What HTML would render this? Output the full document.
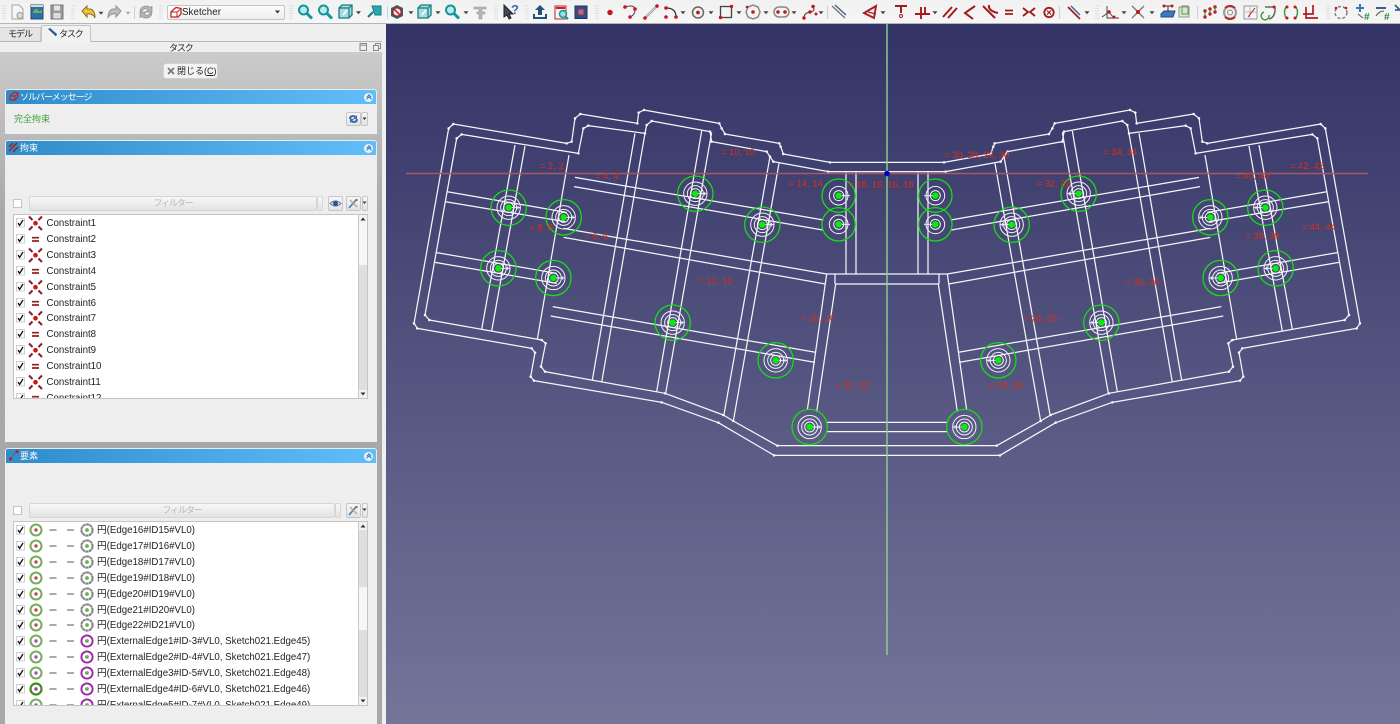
<!DOCTYPE html>
<html lang="ja"><head><meta charset="utf-8"><title>FreeCAD Sketcher</title>
<style>
*{box-sizing:border-box}
html,body{margin:0;padding:0;width:1400px;height:724px;overflow:hidden;background:#efefef}
#w{position:absolute;left:0;top:0;width:1400px;height:724px;overflow:hidden;filter:blur(.3px);font:9.7px "Liberation Sans","Noto Sans CJK JP",sans-serif;color:#222}
.a{position:absolute}
.k{letter-spacing:-1.1px;font-size:9px}
.hd{position:absolute;left:5px;width:372px;height:15px;background:linear-gradient(90deg,#2f8cca,#62bdfb);border:1px solid #e6eef5;border-bottom:0;border-radius:3px 3px 0 0;color:#fff;font-size:9px;font-weight:bold;line-height:14px;padding-left:14px}
.bd{position:absolute;left:5px;width:372px;background:#eee}
.col{position:absolute;right:3px;top:2.500px;width:9px;height:9px;border-radius:50%;background:#eef6fc}
.col:before,.col:after{content:"";position:absolute;left:3px;width:3px;height:3px;border-top:1px solid #2f7fb8;border-left:1px solid #2f7fb8;transform:rotate(45deg)}
.col:before{top:2px}.col:after{top:4.500px}
.btn{position:absolute;background:linear-gradient(#f7f7f7,#e3e3e3);border:1px solid #c6c6c6;border-radius:2px}
.cb{position:absolute;background:#fff;border:1px solid #c4c4c4;width:9px;height:9px}
.list{position:absolute;left:13px;width:355px;height:185px;background:#fff;border:1px solid #c4c4c4;overflow:hidden}
.r{position:absolute;left:0;height:16px;line-height:16px;white-space:nowrap;width:345px}
.r svg{position:absolute;left:0;top:0;width:100px;height:16px}
.r span{position:absolute;top:1px}
.sb{position:absolute;right:0;top:0;width:9px;height:183px;background:#dfdfdf;border-left:1px solid #c8c8c8}
.sbh{position:absolute;left:0;width:8px;background:#f7f7f7}
.sba{position:absolute;left:0;width:8px;height:8px;background:#f3f3f3}
</style></head><body><div id="w">
<svg width="0" height="0" style="position:absolute">
<defs>
<marker id="m" markerUnits="userSpaceOnUse" markerWidth="10" markerHeight="10" refX="5" refY="5"><circle cx="5" cy="5" r="3.800" fill="#f8f8fc"/></marker>
<g id="hole"><circle r="53" fill="none" stroke="#14e014" stroke-width="3.800"/><g fill="none" stroke="#f0f0f6" stroke-width="3"><circle r="15"/><circle r="24"/><circle r="35"/></g><path d="M0 0H35M28 -5V5" stroke="#f0f0f6" stroke-width="3"/><circle r="9.500" fill="#04f004"/></g>
<g id="holeb"><circle r="50" fill="none" stroke="#14e014" stroke-width="3.800"/><g fill="none" stroke="#f0f0f6" stroke-width="3"><circle r="15"/><circle r="28"/></g><path d="M0 0H34" stroke="#f0f0f6" stroke-width="3"/><circle r="9.500" fill="#04f004"/></g>
<g id="ck"><rect x="16.500" y="3.500" width="8" height="8.500" fill="#fff" stroke="#cfcfcf"/><path d="M18 8l1.600 2.400L23 5" fill="none" stroke="#111" stroke-width="1.300"/></g>
<g id="X"><path d="M29 1.500l3.500 3.500M42 1.500l-3.500 3.500M29 15l3.500-3.500M42 15l-3.500-3.500" stroke="#8c1b1b" stroke-width="2"/><circle cx="35.500" cy="8.200" r="2.300" fill="#c91616"/></g>
<g id="E"><path d="M32 6.700h7M32 10h7" stroke="#951c1c" stroke-width="1.700"/></g>
<g id="ds"><path d="M49.500 8h7M67 8h7" stroke="#555" stroke-width="1"/></g>
<g id="c1"><circle cx="36" cy="8" r="5.500" fill="#fff" stroke="#74ae58" stroke-width="2"/><circle cx="36" cy="8" r="1.700" fill="#c24a4a"/></g>
<g id="c2"><circle cx="36" cy="8" r="5.500" fill="#fff" stroke="#74ae58" stroke-width="2"/><circle cx="36" cy="8" r="1.700" fill="#c040c8"/></g>
<g id="c3"><circle cx="36" cy="8" r="5.500" fill="#fff" stroke="#3f8c1c" stroke-width="2.200"/><circle cx="36" cy="8" r="1.700" fill="#b030b8"/></g>
<g id="g1"><circle cx="87" cy="8" r="5.600" fill="#fff" stroke="#808080" stroke-width="2" stroke-dasharray="3.200 .4"/><circle cx="87" cy="8" r="1.900" fill="#6cb04a"/></g>
<g id="g2"><circle cx="87" cy="8" r="5.600" fill="#fff" stroke="#a224a8" stroke-width="1.900"/><circle cx="87" cy="8" r="1.900" fill="#6cb04a"/></g>
<path id="dd" d="M-2.500-1.200h5l-2.500 3z" fill="#444"/>
<g id="gr" fill="#cfcfcf"><circle cx="-1" cy="-6" r=".6"/><circle cx="1" cy="-6" r=".6"/><circle cx="-1" cy="-3.500" r=".6"/><circle cx="1" cy="-3.500" r=".6"/><circle cx="-1" cy="-1" r=".6"/><circle cx="1" cy="-1" r=".6"/><circle cx="-1" cy="1.500" r=".6"/><circle cx="1" cy="1.500" r=".6"/><circle cx="-1" cy="4" r=".6"/><circle cx="1" cy="4" r=".6"/><circle cx="-1" cy="6.500" r=".6"/><circle cx="1" cy="6.500" r=".6"/></g>
<g id="mg"><circle cx="-1.500" cy="-2" r="4.500" fill="#bdeaea" stroke="#14959e" stroke-width="2"/><path d="M2 1.500l5 5" stroke="#14959e" stroke-width="3"/></g>
<g id="cube"><path d="M-7-4l3-3h10v10l-3 3H-7z" fill="#a5dcdc" stroke="#137e86" stroke-width="1.300"/><path d="M-7-4H3V6M3-4l3-3" fill="none" stroke="#137e86" stroke-width="1.200"/><path d="M-3 3l4-5" stroke="#fff" stroke-width="1.500"/></g>
</defs></svg>

<!-- toolbar -->
<div class="a" style="left:0;top:0;width:1400px;height:24px;background:linear-gradient(#f1f1f1,#f6f6f6);border-bottom:1px solid #b4b4b4"></div>
<svg class="a" style="left:0;top:0" width="1400" height="24">
<use href="#gr" x="4" y="12"/><use href="#gr" x="73" y="12"/><use href="#gr" x="161" y="12"/><use href="#gr" x="291" y="12"/><use href="#gr" x="496" y="12"/><use href="#gr" x="527" y="12"/><use href="#gr" x="597" y="12"/><use href="#gr" x="1097" y="12"/><use href="#gr" x="1328" y="12"/>
<path d="M134.500 6v13M387.500 6v13M827.500 6v13M1059.500 6v13M1197.500 6v13" stroke="#d0d0d0"/>
<!-- file -->
<path d="M12 5h7l4 4v10H12z" fill="#f6f6f6" stroke="#a4a4a4"/><circle cx="20" cy="15.500" r="3" fill="#ddd" stroke="#999"/>
<rect x="31" y="5" width="12" height="14" fill="#2f6ea8" stroke="#1d4a78"/><path d="M33 12q3-5 5-2t4-1v4h-9z" fill="#68b05a"/><path d="M31 5h12v2H31z" fill="#d8d8d8"/>
<path d="M51 5h12v14H51z" fill="#9a9a9a" stroke="#777"/><rect x="54" y="5.500" width="6" height="5" fill="#e6e6e6"/><rect x="53.500" y="13" width="7" height="5.500" fill="#ddd"/>
<path d="M82 11l5-5v3h3q5 1 5 9q-2-5-8-4v3z" fill="#eec23e" stroke="#8a6d1c"/><use href="#dd" x="101" y="13"/>
<path d="M121 11l-5-5v3h-3q-5 1-5 9q2-5 8-4v3z" fill="#b9bec3" stroke="#8f9499"/><use href="#dd" x="128" y="13" opacity=".4"/>
<path d="M140 11q1-5 6-5q3 0 5 2l1-2v6h-6l2-2q-4-3-6 1zM152 13q-1 5-6 5q-3 0-5-2l-1 2v-6h6l-2 2q4 3 6-1z" fill="#b2b6ba" stroke="#8a8e92" stroke-width=".7"/>
<!-- view -->
<use href="#mg" x="305" y="12"/><use href="#mg" x="325" y="12"/><use href="#cube" x="346" y="12"/><use href="#dd" x="358.500" y="12.500"/>
<path d="M372 6h9v9h-6z" fill="#27a9b0" stroke="#137e86"/><path d="M373 12l-5 5" stroke="#137e86" stroke-width="2"/>
<path d="M391 8l6-3 6 3v8l-6 3-6-3z" fill="#16737a"/><circle cx="397" cy="12" r="4.300" fill="#eee" stroke="#c61818" stroke-width="1.500"/><path d="M394 9l6 6" stroke="#c61818" stroke-width="1.500"/><use href="#dd" x="411" y="12.500"/>
<use href="#cube" x="425" y="12"/><use href="#dd" x="438" y="12.500"/><use href="#mg" x="452" y="12"/><use href="#dd" x="466" y="12.500"/>
<path d="M474 7h12v2h-4v3h3v2h-3v5h-3v-5h-2v-2h2V9h-5z" fill="#b6b6b6" stroke="#9a9a9a" stroke-width=".6"/>
<path d="M504 5l0 12 3-2 2 4 2-1-2-4h4z" fill="#3e4a5a" stroke="#222"/><text x="511" y="14" font-size="13" font-weight="bold" fill="#3b6aa8" font-family="Liberation Sans">?</text>
<path d="M533 14v5h14v-5h-2v3h-10v-3z" fill="#23507c"/><path d="M540 5l5 5h-3v5h-4v-5h-3z" fill="#23507c"/>
<path d="M555 6h11v13h-11z" fill="#f4f4f4" stroke="#c62020"/><path d="M556 8h9" stroke="#c62020" stroke-width="2"/><circle cx="563" cy="14" r="3.500" fill="#9adede" stroke="#12939a" stroke-width="1.400"/><path d="M565 16l3 3" stroke="#12939a" stroke-width="2"/>
<rect x="575" y="6" width="12" height="12.500" fill="#2b4f8c" stroke="#1e3560"/><rect x="578" y="9" width="6" height="6" fill="#8a7aa8" stroke="#c02020"/>
<!-- sketch geometry -->
<circle cx="610" cy="12.500" r="2.700" fill="#c71616"/>
<path d="M625 7q10-3 10 3 0 5-5 7" fill="none" stroke="#444"/><g fill="#c71616"><circle cx="625" cy="7" r="1.800"/><circle cx="635" cy="9" r="1.800"/><circle cx="630" cy="17" r="1.800"/></g>
<path d="M645 18l12-12" stroke="#999" stroke-width="2.400"/><path d="M645 18l12-12" stroke="#eee" stroke-width=".8"/><g fill="#c71616"><circle cx="645" cy="18" r="1.800"/><circle cx="657" cy="6" r="1.800"/></g>
<path d="M666 8q10 0 10 9" fill="none" stroke="#333" stroke-width="1.200"/><g fill="#c71616"><circle cx="666" cy="8" r="1.800"/><circle cx="666" cy="17" r="1.800"/><circle cx="676" cy="17" r="1.800"/></g><use href="#dd" x="683" y="12.500"/>
<circle cx="698" cy="12.500" r="5.500" fill="none" stroke="#666" stroke-width="1.500"/><circle cx="698" cy="12.500" r="1.900" fill="#c71616"/><use href="#dd" x="711" y="12.500"/>
<rect x="720.500" y="6.500" width="11" height="11" fill="none" stroke="#444" stroke-width="1.300"/><g fill="#c71616"><circle cx="720.500" cy="17.500" r="1.700"/><circle cx="731.500" cy="6.500" r="1.700"/></g><use href="#dd" x="739" y="12.500"/>
<path d="M748 7l5-2 5 2 2 5-2 5-5 2-5-2-2-5z" fill="none" stroke="#888" stroke-width="1.500"/><circle cx="753" cy="12" r="1.800" fill="#c71616"/><circle cx="747" cy="7" r="1.300" fill="#c71616"/><use href="#dd" x="766" y="12.500"/>
<rect x="774" y="7" width="15" height="10" rx="5" fill="none" stroke="#888" stroke-width="1.500"/><g fill="#c71616"><circle cx="778" cy="12" r="1.800"/><circle cx="785" cy="12" r="1.800"/></g><use href="#dd" x="794" y="12.500"/>
<path d="M804 18q0-5 6-6t3-5l2-1" fill="none" stroke="#444" stroke-width="1.100"/><g fill="#c71616"><circle cx="804" cy="18" r="1.700"/><circle cx="810" cy="12" r="1.700"/><circle cx="813" cy="6.500" r="1.700"/><circle cx="816" cy="14" r="1.500"/></g><use href="#dd" x="821" y="12.500"/>
<path d="M832 6l13 12" stroke="#777" stroke-width="1.400"/><path d="M835 5l11 10" stroke="#3f5f8c" stroke-width="1.300"/>
<path d="M864 13l12-7-2 12z" fill="none" stroke="#a81e1e" stroke-width="1.900"/><path d="M868 12l8 2" stroke="#a81e1e" stroke-width="1.400"/><use href="#dd" x="883" y="12.500"/>
<!-- constraints -->
<path d="M895 6h12M901 6v7" stroke="#a21c1c" stroke-width="2"/><circle cx="901" cy="16" r="1.500" fill="none" stroke="#a21c1c"/>
<path d="M915 14h15M921 7v12M925 7v7" stroke="#a21c1c" stroke-width="1.900"/><use href="#dd" x="935" y="12.500"/>
<path d="M943 17l9-10M948 18l9-10" stroke="#a21c1c" stroke-width="2"/>
<path d="M975 6l-10 7 8 6" fill="none" stroke="#a21c1c" stroke-width="2"/>
<path d="M983 6l12 12M989 5q-1 6 9 8" fill="none" stroke="#a21c1c" stroke-width="2"/>
<path d="M1005 10.500h8M1005 14h8" stroke="#a21c1c" stroke-width="1.800"/>
<path d="M1023 8l5 4-5 4M1035 8l-5 4 5 4" fill="none" stroke="#a21c1c" stroke-width="1.900"/>
<circle cx="1049" cy="12.500" r="4.700" fill="none" stroke="#a21c1c" stroke-width="1.800"/><path d="M1047 10.500l4 4m0-4l-4 4" stroke="#a21c1c" stroke-width="1.200"/>
<path d="M1068 7l12 12" stroke="#a21c1c" stroke-width="1.800"/><path d="M1071 6l9 9" stroke="#3f5f8c" stroke-width="1.300"/><use href="#dd" x="1087" y="12.500"/>
<path d="M1107 6v12h12" fill="none" stroke="#666" stroke-width="1.200"/><path d="M1102 17l7-5 4 5" fill="none" stroke="#444"/><g fill="#c71616"><circle cx="1109" cy="12" r="1.800"/><circle cx="1114" cy="17" r="1.500"/></g><use href="#dd" x="1124" y="12.500"/>
<path d="M1132 6l12 12M1144 6l-12 12" stroke="#777" stroke-width="1.300"/><circle cx="1138" cy="12" r="2" fill="#c71616"/><use href="#dd" x="1152" y="12.500"/>
<path d="M1161 14l3-3h11l-2 6h-12z" fill="#3f78b8" stroke="#234e80"/><path d="M1163 6h10M1168 6v6" stroke="#333"/><g fill="#c71616"><circle cx="1164" cy="6" r="1.500"/><circle cx="1172" cy="6" r="1.500"/></g>
<rect x="1179" y="7" width="10" height="10" fill="#dde6d8" stroke="#88a088"/><rect x="1182" y="6" width="6" height="8" fill="none" stroke="#5b9c55"/>
<g fill="#c71616"><circle cx="1205" cy="17" r="1.700"/><circle cx="1205" cy="11" r="1.700"/><circle cx="1210" cy="14" r="1.700"/><circle cx="1210" cy="9" r="1.700"/><circle cx="1215" cy="12" r="1.700"/><circle cx="1215" cy="7" r="1.700"/></g><path d="M1205 11v6M1210 9v5M1215 7v5" stroke="#3a8a3a"/>
<circle cx="1230" cy="12.500" r="6" fill="none" stroke="#999" stroke-width="2"/><circle cx="1230" cy="12.500" r="2.500" fill="none" stroke="#888"/><path d="M1225 8a7 7 0 0 1 10 0M1225 17a7 7 0 0 0 10 0" fill="none" stroke="#c71616" stroke-width="1.700"/>
<rect x="1244" y="6" width="13" height="13" fill="#f4f4f4" stroke="#999"/><path d="M1244 12h13M1250 6v13" stroke="#bbb"/><path d="M1248 17l7-9" stroke="#c71616"/>
<path d="M1265 7h10v4q-1 7-6 8" fill="none" stroke="#666" stroke-width="1.500"/><path d="M1264 12a4 4 0 1 0 5 3" fill="none" stroke="#3f9a3f" stroke-width="1.500"/><circle cx="1274" cy="7" r="1.500" fill="#c71616"/>
<path d="M1286 7q-3 5 0 11M1296 7q3 5 0 11" fill="none" stroke="#3f9a3f" stroke-width="1.500"/><g fill="#c71616"><circle cx="1287" cy="7" r="1.500"/><circle cx="1295" cy="7" r="1.500"/><circle cx="1287" cy="18" r="1.500"/><circle cx="1295" cy="18" r="1.500"/></g>
<path d="M1306 7v11h12M1303 14h10V5" fill="none" stroke="#b01c1c" stroke-width="1.700"/>
<circle cx="1341" cy="12.500" r="6" fill="none" stroke="#777" stroke-width="1.400" stroke-dasharray="3 2"/><circle cx="1336" cy="8" r="1.300" fill="#c71616"/><circle cx="1346" cy="8" r="1.300" fill="#c71616"/>
<path d="M1356 8h8M1360 4v8" stroke="#3a78b8" stroke-width="2"/><path d="M1358 14l5 4" stroke="#555"/><text x="1364" y="20" font-size="10" font-weight="bold" fill="#2c8c2c" font-family="Liberation Sans">#</text>
<path d="M1376 8h10" stroke="#3a5f8c" stroke-width="2"/><path d="M1376 16q3-5 8-5" fill="none" stroke="#555"/><text x="1384" y="20" font-size="10" font-weight="bold" fill="#2c8c2c" font-family="Liberation Sans">#</text>
<path d="M1395 5l5 5M1395 10h5" stroke="#3a5f8c" stroke-width="1.800"/>
</svg>
<!-- workbench combo -->
<div class="btn" style="left:167px;top:5px;width:118px;height:15px;background:linear-gradient(#fbfbfb,#eee)"></div>
<svg class="a" style="left:169px;top:6px" width="14" height="13"><path d="M4 4l3-2.500 5 1V8l-3 3H2V6z" fill="#fff" stroke="#c62020" stroke-width="1.300"/><path d="M2 6h6v5M8 6l4-3" fill="none" stroke="#c62020"/></svg>
<div class="a" style="left:182px;top:6px;font-size:9.7px;line-height:13px;letter-spacing:.1px">Sketcher</div>
<svg class="a" style="left:274px;top:9px" width="8" height="6"><path d="M1 1.500h5L3.500 4.500z" fill="#333"/></svg>

<!-- dock background -->
<div class="a" style="left:0;top:24px;width:386px;height:700px;background:#efefef"></div>
<div class="a" style="left:0;top:52px;width:382px;height:672px;background:linear-gradient(#cbcbcb 0,#a9a9a9 160px,#a8a8a8 100%)"></div>
<!-- tabs -->
<div class="a" style="left:0;top:41px;width:382px;height:1px;background:#b8b8b8"></div>
<div class="a" style="left:0;top:27px;width:41px;height:14px;background:#e4e4e4;border:1px solid #c8c8c8;border-left:0;border-bottom:0;text-align:center;line-height:13px"><span class="k">モデル</span></div>
<div class="a" style="left:41px;top:25px;width:50px;height:17px;background:#f2f2f2;border:1px solid #c4c4c4;border-bottom:0;border-radius:2px 2px 0 0;line-height:16px;padding-left:17px"><span class="k">タスク</span></div>
<svg class="a" style="left:47px;top:27px" width="11" height="11"><path d="M1 2l2-1 7 6-1 2.500z" fill="#2e5a8c"/></svg>
<div class="a" style="left:169px;top:41.500px;line-height:12px"><span class="k">タスク</span></div>
<svg class="a" style="left:358px;top:42px" width="24" height="10"><rect x="2" y="1.500" width="6.500" height="7" fill="none" stroke="#8a8a8a"/><path d="M2 3.200h6.500" stroke="#8a8a8a"/><rect x="15.500" y="3.500" width="5" height="5" fill="none" stroke="#8a8a8a"/><path d="M17.500 3.500v-2h5v5h-2" fill="none" stroke="#8a8a8a"/></svg>
<!-- close -->
<div class="a" style="left:164px;top:64px;width:53px;height:14px;background:#f3f3f3;border-radius:2px;box-shadow:0 0 0 .5px #ddd;line-height:14px;padding-left:13px;font-size:9px">閉じる(<u>C</u>)</div>
<svg class="a" style="left:167px;top:67px" width="8" height="8"><path d="M1 1l6 6M7 1l-6 6" stroke="#777" stroke-width="1.700"/></svg>

<!-- solver -->
<div class="bd" style="top:103px;height:31px"></div>
<div class="hd" style="top:89px"><span class="k" style="letter-spacing:-1px;font-weight:normal">ソルバーメッセージ</span><i class="col"></i></div>
<svg class="a" style="left:8px;top:91px" width="11" height="11"><path d="M3 4l3-3 4 1v4l-3 3H2V5z" fill="none" stroke="#c62020" stroke-width="1.200"/><path d="M2 5h5v4M7 5l3-3" fill="none" stroke="#c62020"/></svg>
<div class="a" style="left:14px;top:113px;font-size:9px;line-height:13px;color:#3da23d">完全拘束</div>
<div class="btn" style="left:346px;top:112px;width:15px;height:14px"></div>
<svg class="a" style="left:347px;top:113px" width="13" height="12"><path d="M2 6q0-4 4-4 2 0 3 1l1-1v4H6l1.500-1.500Q5 3 4 6zM11 6q0 4-4 4-2 0-3-1l-1 1V6h4L5.500 7.500Q8 9 9 6z" fill="#3f73ad"/></svg>
<div class="btn" style="left:361px;top:112px;width:7px;height:14px"></div>
<svg class="a" style="left:362px;top:117px" width="6" height="4"><path d="M.5.500h4L2.500 3z" fill="#333"/></svg>

<!-- constraints -->
<div class="bd" style="top:154px;height:288px"></div>
<div class="hd" style="top:140px"><span style="font-weight:normal">拘束</span><i class="col"></i></div>
<svg class="a" style="left:8px;top:141px" width="11" height="12"><path d="M1 10l8-8M1 6l4-4M5 11l5-5" stroke="#a01c1c" stroke-width="1.500"/></svg>
<div class="cb" style="left:13px;top:199px"></div>
<div class="btn" style="left:29px;top:196px;width:288px;height:15px;border-color:#d6d6d6;text-align:center;line-height:13px;color:#b8b8b8"><span class="k">フィルター</span></div>
<div class="btn" style="left:317px;top:196px;width:6px;height:15px;border-color:#d6d6d6"></div>
<div class="btn" style="left:328px;top:196px;width:15px;height:15px"></div>
<svg class="a" style="left:329px;top:198px" width="13" height="11"><path d="M1 5.500q5.500-5 11 0q-5.500 5-11 0z" fill="#dde6f0" stroke="#5a7da5"/><circle cx="6.500" cy="5.500" r="2.400" fill="#28507e"/></svg>
<div class="btn" style="left:346px;top:196px;width:15px;height:15px"></div>
<svg class="a" style="left:347px;top:197px" width="13" height="13"><path d="M2 11l7-8" stroke="#4a7db0" stroke-width="1.700"/><path d="M3 3l7 7" stroke="#aaa" stroke-width="1.400"/><circle cx="9.500" cy="3" r="1.200" fill="#b55"/></svg>
<div class="btn" style="left:362px;top:196px;width:6px;height:15px"></div>
<svg class="a" style="left:362px;top:201px" width="6" height="4"><path d="M.5.500h4L2.500 3z" fill="#333"/></svg>
<div class="list" style="top:214px">
<div class="r" style="top:0"><svg><use href="#ck" x="-14" y="0"/><use href="#X" x="-14" y="0"/></svg><span style="left:32.500px">Constraint1</span></div>
<div class="r" style="top:15.900px"><svg><use href="#ck" x="-14"/><use href="#E" x="-14"/></svg><span style="left:32.500px">Constraint2</span></div>
<div class="r" style="top:31.800px"><svg><use href="#ck" x="-14"/><use href="#X" x="-14"/></svg><span style="left:32.500px">Constraint3</span></div>
<div class="r" style="top:47.700px"><svg><use href="#ck" x="-14"/><use href="#E" x="-14"/></svg><span style="left:32.500px">Constraint4</span></div>
<div class="r" style="top:63.600px"><svg><use href="#ck" x="-14"/><use href="#X" x="-14"/></svg><span style="left:32.500px">Constraint5</span></div>
<div class="r" style="top:79.500px"><svg><use href="#ck" x="-14"/><use href="#E" x="-14"/></svg><span style="left:32.500px">Constraint6</span></div>
<div class="r" style="top:95.400px"><svg><use href="#ck" x="-14"/><use href="#X" x="-14"/></svg><span style="left:32.500px">Constraint7</span></div>
<div class="r" style="top:111.300px"><svg><use href="#ck" x="-14"/><use href="#E" x="-14"/></svg><span style="left:32.500px">Constraint8</span></div>
<div class="r" style="top:127.200px"><svg><use href="#ck" x="-14"/><use href="#X" x="-14"/></svg><span style="left:32.500px">Constraint9</span></div>
<div class="r" style="top:143.100px"><svg><use href="#ck" x="-14"/><use href="#E" x="-14"/></svg><span style="left:32.500px">Constraint10</span></div>
<div class="r" style="top:159px"><svg><use href="#ck" x="-14"/><use href="#X" x="-14"/></svg><span style="left:32.500px">Constraint11</span></div>
<div class="r" style="top:174.900px"><svg><use href="#ck" x="-14"/><use href="#E" x="-14"/></svg><span style="left:32.500px">Constraint12</span></div>
<div class="sb"><div class="sba" style="top:0"></div><div class="sbh" style="top:8px;height:42px"></div><div class="sba" style="bottom:0"></div></div>
<svg class="a" style="right:0;top:0" width="8" height="183"><path d="M1.500 5.500h5L4 2.500zM1.500 177.500h5L4 180.500z" fill="#333"/></svg>
</div>

<!-- elements -->
<div class="bd" style="top:462px;height:262px"></div>
<div class="hd" style="top:448px"><span style="font-weight:normal">要素</span><i class="col"></i></div>
<svg class="a" style="left:8px;top:449px" width="11" height="12"><path d="M2 10l7-8" stroke="#666"/><circle cx="2.500" cy="10" r="1.500" fill="#c71616"/><circle cx="9" cy="2.500" r="1.500" fill="#c71616"/></svg>
<div class="cb" style="left:13px;top:506px"></div>
<div class="btn" style="left:29px;top:503px;width:306px;height:15px;border-color:#d6d6d6;text-align:center;line-height:13px;color:#b8b8b8"><span class="k">フィルター</span></div>
<div class="btn" style="left:335px;top:503px;width:6px;height:15px;border-color:#d6d6d6"></div>
<div class="btn" style="left:346px;top:503px;width:15px;height:15px"></div>
<svg class="a" style="left:347px;top:504px" width="13" height="13"><path d="M2 11l7-8" stroke="#4a7db0" stroke-width="1.700"/><path d="M3 3l7 7" stroke="#aaa" stroke-width="1.400"/><circle cx="9.500" cy="3" r="1.200" fill="#b55"/></svg>
<div class="btn" style="left:362px;top:503px;width:6px;height:15px"></div>
<svg class="a" style="left:362px;top:508px" width="6" height="4"><path d="M.5.500h4L2.500 3z" fill="#333"/></svg>
<div class="list" style="top:521px">
<div class="r" style="top:0"><svg><use href="#ck" x="-14"/><use href="#c1" x="-14"/><use href="#ds" x="-14"/><use href="#g1" x="-14"/></svg><span style="left:83px">円(Edge16#ID15#VL0)</span></div>
<div class="r" style="top:15.900px"><svg><use href="#ck" x="-14"/><use href="#c1" x="-14"/><use href="#ds" x="-14"/><use href="#g1" x="-14"/></svg><span style="left:83px">円(Edge17#ID16#VL0)</span></div>
<div class="r" style="top:31.800px"><svg><use href="#ck" x="-14"/><use href="#c1" x="-14"/><use href="#ds" x="-14"/><use href="#g1" x="-14"/></svg><span style="left:83px">円(Edge18#ID17#VL0)</span></div>
<div class="r" style="top:47.700px"><svg><use href="#ck" x="-14"/><use href="#c1" x="-14"/><use href="#ds" x="-14"/><use href="#g1" x="-14"/></svg><span style="left:83px">円(Edge19#ID18#VL0)</span></div>
<div class="r" style="top:63.600px"><svg><use href="#ck" x="-14"/><use href="#c1" x="-14"/><use href="#ds" x="-14"/><use href="#g1" x="-14"/></svg><span style="left:83px">円(Edge20#ID19#VL0)</span></div>
<div class="r" style="top:79.500px"><svg><use href="#ck" x="-14"/><use href="#c1" x="-14"/><use href="#ds" x="-14"/><use href="#g1" x="-14"/></svg><span style="left:83px">円(Edge21#ID20#VL0)</span></div>
<div class="r" style="top:95.400px"><svg><use href="#ck" x="-14"/><use href="#c1" x="-14"/><use href="#ds" x="-14"/><use href="#g1" x="-14"/></svg><span style="left:83px">円(Edge22#ID21#VL0)</span></div>
<div class="r" style="top:111.300px"><svg><use href="#ck" x="-14"/><use href="#c2" x="-14"/><use href="#ds" x="-14"/><use href="#g2" x="-14"/></svg><span style="left:83px">円(ExternalEdge1#ID-3#VL0, Sketch021.Edge45)</span></div>
<div class="r" style="top:127.200px"><svg><use href="#ck" x="-14"/><use href="#c2" x="-14"/><use href="#ds" x="-14"/><use href="#g2" x="-14"/></svg><span style="left:83px">円(ExternalEdge2#ID-4#VL0, Sketch021.Edge47)</span></div>
<div class="r" style="top:143.100px"><svg><use href="#ck" x="-14"/><use href="#c2" x="-14"/><use href="#ds" x="-14"/><use href="#g2" x="-14"/></svg><span style="left:83px">円(ExternalEdge3#ID-5#VL0, Sketch021.Edge48)</span></div>
<div class="r" style="top:159px"><svg><use href="#ck" x="-14"/><use href="#c3" x="-14"/><use href="#ds" x="-14"/><use href="#g2" x="-14"/></svg><span style="left:83px">円(ExternalEdge4#ID-6#VL0, Sketch021.Edge46)</span></div>
<div class="r" style="top:174.900px"><svg><use href="#ck" x="-14"/><use href="#c2" x="-14"/><use href="#ds" x="-14"/><use href="#g2" x="-14"/></svg><span style="left:83px">円(ExternalEdge5#ID-7#VL0, Sketch021.Edge49)</span></div>
<div class="sb"><div class="sba" style="top:0"></div><div class="sbh" style="top:65px;height:43px"></div><div class="sba" style="bottom:0"></div></div>
<svg class="a" style="right:0;top:0" width="8" height="183"><path d="M1.500 5.500h5L4 2.500zM1.500 177.500h5L4 180.500z" fill="#333"/></svg>
</div>

<!-- 3D viewport -->
<svg class="a" style="left:386px;top:24px" width="1014" height="700" viewBox="386 24 1014 700">
<defs>
<linearGradient id="bg" x1="0" y1="0" x2="0" y2="1"><stop offset="0" stop-color="#333366"/><stop offset="1" stop-color="#75759a"/></linearGradient>
<g id="half" fill="none" stroke="#f6f6fa" stroke-width="3.700" stroke-linejoin="round">
<path marker-mid="url(#m)" d="M1461 187L1290 187L1150 162L1142 140L1138 130L975 102L965 85L958 70L732 30L716 38L712 70L541 42L525 55L515 125L500 130L160 72L146 85L42 670L52 685L395 745L405 758L392 830L402 842L785 907L955 968L1122 1066L1461 1066"/>
<path marker-mid="url(#m)" d="M1461 215L1285 215L1120 185L1110 170L1100 155L935 125L930 95L755 63L740 75L735 100L565 77L550 85L535 160L185 103L170 115L75 645L88 660L425 720L437 730L423 800L435 815L795 880L970 945L1000 963L1132 1037L1461 1037"/>
<path d="M345 135L245 688M375 138L275 693M507 165L412 718M705 100L577 840M735 100L605 847M905 93L770 875M935 97L797 880M1110 170L972 943M1137 190L1000 963M1280 522L1222 930M1307 552L1250 935"/>
<path d="M1338 215V522M1368 215V522M1280 522H1461M1305 552H1461M1305 522V552M1280 967H1461M1280 995H1461"/>
<path d="M525 232L1270 360M522 260L1268 390M140 275L500 337M135 305L495 365M491 385L1280 522M491 412L1276 552M110 458L470 520M105 487L470 550M458 620L1248 757M452 648L1245 787"/>
<g stroke="none"><use href="#hole" x="326" y="323"/><use href="#hole" x="491" y="352"/><use href="#hole" x="886" y="281"/><use href="#hole" x="1087" y="374"/><use href="#holeb" x="1316" y="287"/><use href="#holeb" x="1316" y="373"/><use href="#hole" x="295" y="505"/><use href="#hole" x="460" y="534"/><use href="#hole" x="818" y="668"/><use href="#hole" x="1127" y="781"/><use href="#hole" x="1229" y="981"/></g>
</g>
</defs>
<rect x="386" y="24" width="1014" height="700" fill="url(#bg)"/>
<g transform="translate(400,100) scale(.33333)">
<use href="#half"/>
<use href="#half" transform="translate(2922,0) scale(-1,1)"/>
</g>
<path d="M406 173.500H1368" stroke="#a85862" stroke-width="1.400"/>
<path d="M887 24V655" stroke="#86d890" stroke-width="1.400"/>
<circle cx="887" cy="173.500" r="2.800" fill="#0000c8"/>
<g transform="translate(400,100) scale(.33333)" font-family="Liberation Sans" font-size="28" fill="#da2e14">
<text x="420" y="207">= 2, 2</text><text x="585" y="237">= 4, 4</text><text x="963" y="165">= 10, 10</text><text x="1166" y="259">= 14, 14</text><text x="1345" y="262">= 18, 16, 16, 18</text><text x="388" y="391">= 8, 8</text><text x="553" y="419">= 6, 6</text><text x="896" y="552">= 12, 12</text><text x="1203" y="665">= 20, 20</text><text x="1306" y="865">= 22, 22</text>
</g>
<g transform="translate(880,100) scale(.33333)" font-family="Liberation Sans" font-size="28" fill="#da2e14">
<text x="192" y="174">= 30, 28, 28, 30</text><text x="670" y="165">= 34, 34</text><text x="470" y="259">= 32, 32</text><text x="1066" y="237">= 40, 40</text><text x="1230" y="207">= 42, 42</text><text x="1265" y="390">= 44, 44</text><text x="1096" y="417">= 38, 38</text><text x="736" y="555">= 36, 36</text><text x="430" y="665">= 26, 26</text><text x="327" y="865">= 24, 24</text>
</g>
</svg>
</div></body></html>
